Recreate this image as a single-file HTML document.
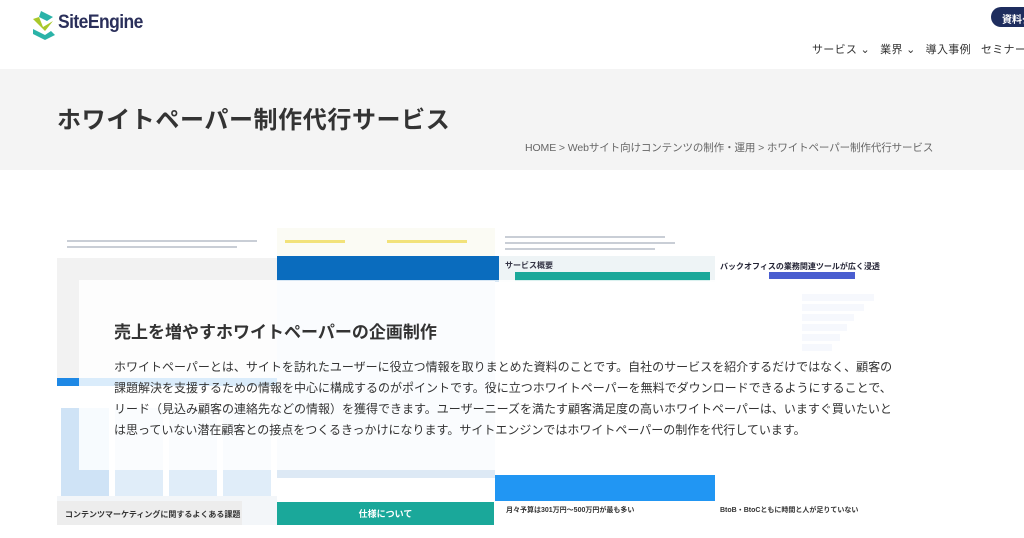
<!DOCTYPE html>
<html><head><meta charset="utf-8"><style>
*{margin:0;padding:0;box-sizing:border-box}
body{width:1024px;height:538px;overflow:hidden;background:#fff;font-family:"Liberation Sans","Noto Sans CJK JP",sans-serif;color:#333;position:relative}
.abs{position:absolute}
.nav{top:41px;font-size:11px;color:#333;white-space:nowrap}
.tl{position:absolute;height:2px;background:#c9ced6}
.bar{position:absolute;height:7px;background:#c7d3f2}
</style></head><body>
<svg class="abs" style="left:31px;top:10px" width="26" height="30" viewBox="0 0 26 30">
<path d="M10 1 L22 7 L16 11 L8 7 Z" fill="#2bb3a8"/>
<path d="M2 9 L8 7 L12 17 L22 11 L14 21 Z" fill="#a9c82a"/>
<path d="M2 19 L14 25 L20 21 L24 25 L14 30 L2 24 Z" fill="#2bb3a8"/>
</svg>
<div class="abs" style="left:58px;top:12px;font-size:19px;color:#2a2f5a;font-weight:bold;letter-spacing:-0.6px;transform:scaleX(0.92);transform-origin:left">SiteEngine</div>
<div class="abs" style="left:991px;top:7px;width:60px;height:20px;border-radius:10px;background:#1e2d5e;color:#fff;font-size:10px;font-weight:bold;padding:4px 0 0 11px">資料ダ</div>
<div class="abs nav" style="left:812px;letter-spacing:0.3px">サービス ⌄&nbsp;&nbsp; 業界 ⌄&nbsp;&nbsp; 導入事例&nbsp;&nbsp; セミナー</div>
<div class="abs" style="left:0;top:69px;width:1024px;height:101px;background:#f4f4f4"></div>
<div class="abs" style="left:57px;top:100px;font-size:24px;font-weight:bold;color:#333;letter-spacing:0.6px">ホワイトペーパー制作代行サービス</div>
<div class="abs" style="left:525px;top:140px;font-size:10.5px;color:#666;letter-spacing:-0.1px">HOME &gt; Webサイト向けコンテンツの制作・運用 &gt; ホワイトペーパー制作代行サービス</div>

<!-- collage -->
<div class="abs" style="left:57px;top:228px;width:877px;height:297px;background:#f3f6f9;overflow:hidden">
 <div class="abs" style="left:0;top:0;width:220px;height:30px;background:#fff"></div>
 <div class="tl" style="left:10px;top:12px;width:190px"></div>
 <div class="tl" style="left:10px;top:18px;width:170px"></div>
 <div class="abs" style="left:220px;top:0;width:218px;height:28px;background:#fbfbf4"></div>
 <div class="abs" style="left:228px;top:12px;width:60px;height:3px;background:#f2e27a"></div>
 <div class="abs" style="left:330px;top:12px;width:80px;height:3px;background:#f2e27a"></div>
 <div class="abs" style="left:220px;top:28px;width:218px;height:222px;background:#dde9f5"></div>
 <div class="abs" style="left:220px;top:28px;width:218px;height:25px;background:#0a6cbe"></div>
 <div class="abs" style="left:438px;top:0;width:220px;height:250px;background:#fff"></div>
 <div class="tl" style="left:448px;top:8px;width:160px"></div>
 <div class="tl" style="left:448px;top:14px;width:170px"></div>
 <div class="tl" style="left:448px;top:20px;width:150px"></div>
 <div class="abs" style="left:438px;top:28px;width:220px;height:26px;background:#eef4f6"></div>
 <div class="abs" style="left:438px;top:28px;width:4px;height:26px;background:#0a6cbe"></div>
 <div class="abs" style="left:448px;top:32px;font-size:8px;font-weight:bold;color:#334">サービス概要</div>
 <div class="abs" style="left:458px;top:44px;width:195px;height:9px;background:#1aa89a"></div>
 <div class="abs" style="left:658px;top:0;width:219px;height:297px;background:#fff"></div>
 <div class="abs" style="left:663px;top:33px;font-size:8px;font-weight:bold;color:#223">バックオフィスの業務関連ツールが広く浸透</div>
 <div class="abs" style="left:712px;top:44px;width:86px;height:7px;background:#4a5ed0"></div>
 <div class="bar" style="left:745px;top:66px;width:72px"></div>
 <div class="bar" style="left:745px;top:76px;width:62px"></div>
 <div class="bar" style="left:745px;top:86px;width:52px"></div>
 <div class="bar" style="left:745px;top:96px;width:45px"></div>
 <div class="bar" style="left:745px;top:106px;width:38px"></div>
 <div class="bar" style="left:745px;top:116px;width:30px"></div>
 <div class="abs" style="left:0;top:30px;width:220px;height:120px;background:#f2f2f2"></div>
 <div class="abs" style="left:0;top:150px;width:220px;height:8px;background:#1e88e5"></div>
 <div class="abs" style="left:0;top:158px;width:220px;height:110px;background:#fff"></div>
 <div class="abs" style="left:4px;top:180px;width:48px;height:88px;background:#cfe3f6"></div>
 <div class="abs" style="left:58px;top:180px;width:48px;height:88px;background:#e0edf9"></div>
 <div class="abs" style="left:112px;top:180px;width:48px;height:88px;background:#e0edf9"></div>
 <div class="abs" style="left:166px;top:180px;width:48px;height:88px;background:#e0edf9"></div>
 <div class="abs" style="left:220px;top:250px;width:218px;height:47px;background:#fff"></div>
 <div class="abs" style="left:438px;top:250px;width:220px;height:47px;background:#fff"></div>
 <div class="abs" style="left:438px;top:247px;width:220px;height:26px;background:#2196f3"></div>
 <div class="abs" style="left:0;top:273px;width:185px;height:24px;background:#ededed"></div>
 <div class="abs" style="left:8px;top:281px;font-size:8px;font-weight:bold;color:#333">コンテンツマーケティングに関するよくある課題</div>
 <div class="abs" style="left:220px;top:274px;width:217px;height:23px;background:#1aa89a;color:#fff;font-size:9px;font-weight:bold;text-align:center;padding-top:5px">仕様について</div>
 <div class="abs" style="left:449px;top:277px;font-size:7px;font-weight:bold;color:#333">月々予算は301万円〜500万円が最も多い</div>
 <div class="abs" style="left:663px;top:277px;font-size:7px;font-weight:bold;color:#333">BtoB・BtoCともに時間と人が足りていない</div>
</div>
<!-- overlay -->
<div class="abs" style="left:79px;top:280px;width:855px;height:190px;background:rgba(255,255,255,0.84)"></div>
<div class="abs" style="left:114px;top:318px;font-size:17px;font-weight:bold;color:#333">売上を増やすホワイトペーパーの企画制作</div>
<div class="abs" style="left:114px;top:357px;width:786px;font-size:12px;line-height:21px;color:#333">ホワイトペーパーとは、サイトを訪れたユーザーに役立つ情報を取りまとめた資料のことです。自社のサービスを紹介するだけではなく、顧客の課題解決を支援するための情報を中心に構成するのがポイントです。役に立つホワイトペーパーを無料でダウンロードできるようにすることで、リード（見込み顧客の連絡先などの情報）を獲得できます。ユーザーニーズを満たす顧客満足度の高いホワイトペーパーは、いますぐ買いたいとは思っていない潜在顧客との接点をつくるきっかけになります。サイトエンジンではホワイトペーパーの制作を代行しています。</div>
</body></html>
